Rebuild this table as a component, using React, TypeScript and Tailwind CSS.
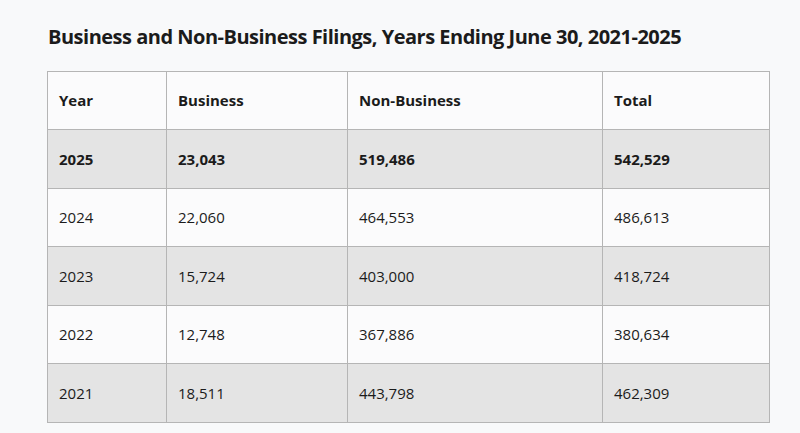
import React from 'react';

const rows = [
  { year: '2025', business: '23,043', nonBusiness: '519,486', total: '542,529', bold: true },
  { year: '2024', business: '22,060', nonBusiness: '464,553', total: '486,613' },
  { year: '2023', business: '15,724', nonBusiness: '403,000', total: '418,724' },
  { year: '2022', business: '12,748', nonBusiness: '367,886', total: '380,634' },
  { year: '2021', business: '18,511', nonBusiness: '443,798', total: '462,309' },
];

export default function App() {
  return (
    <div className="min-h-[433px] w-[800px] bg-[#f8f9fa] pl-[47px] pt-[24px] text-[#1b1b1b] [font-family:'Open_Sans','Noto_Sans',sans-serif]">
      <h2 className="pl-px text-[20px] font-bold leading-[26px] tracking-[-0.5px]">
        Business and Non-Business Filings, Years Ending June 30, 2021-2025
      </h2>
      <table className="mt-[21px] w-[722px] table-fixed border-collapse text-[15px]">
        <colgroup>
          <col className="w-[119px]" />
          <col className="w-[181px]" />
          <col className="w-[255px]" />
          <col className="w-[167px]" />
        </colgroup>
        <thead>
          <tr className="h-[58px] bg-[#fbfbfc]">
            {['Year', 'Business', 'Non-Business', 'Total'].map((h) => (
              <th key={h} className="border border-[#b5b5b5] px-[11px] text-left font-bold">
                {h}
              </th>
            ))}
          </tr>
        </thead>
        <tbody>
          {rows.map((r, i) => (
            <tr
              key={r.year}
              className={`h-[58.5px] ${i % 2 === 0 ? 'bg-[#e4e4e4]' : 'bg-[#fbfbfc]'} ${r.bold ? 'font-bold' : 'font-normal'}`}
            >
              <td className="border border-[#b5b5b5] px-[11px]">{r.year}</td>
              <td className="border border-[#b5b5b5] px-[11px]">{r.business}</td>
              <td className="border border-[#b5b5b5] px-[11px]">{r.nonBusiness}</td>
              <td className="border border-[#b5b5b5] px-[11px]">{r.total}</td>
            </tr>
          ))}
        </tbody>
      </table>
    </div>
  );
}
